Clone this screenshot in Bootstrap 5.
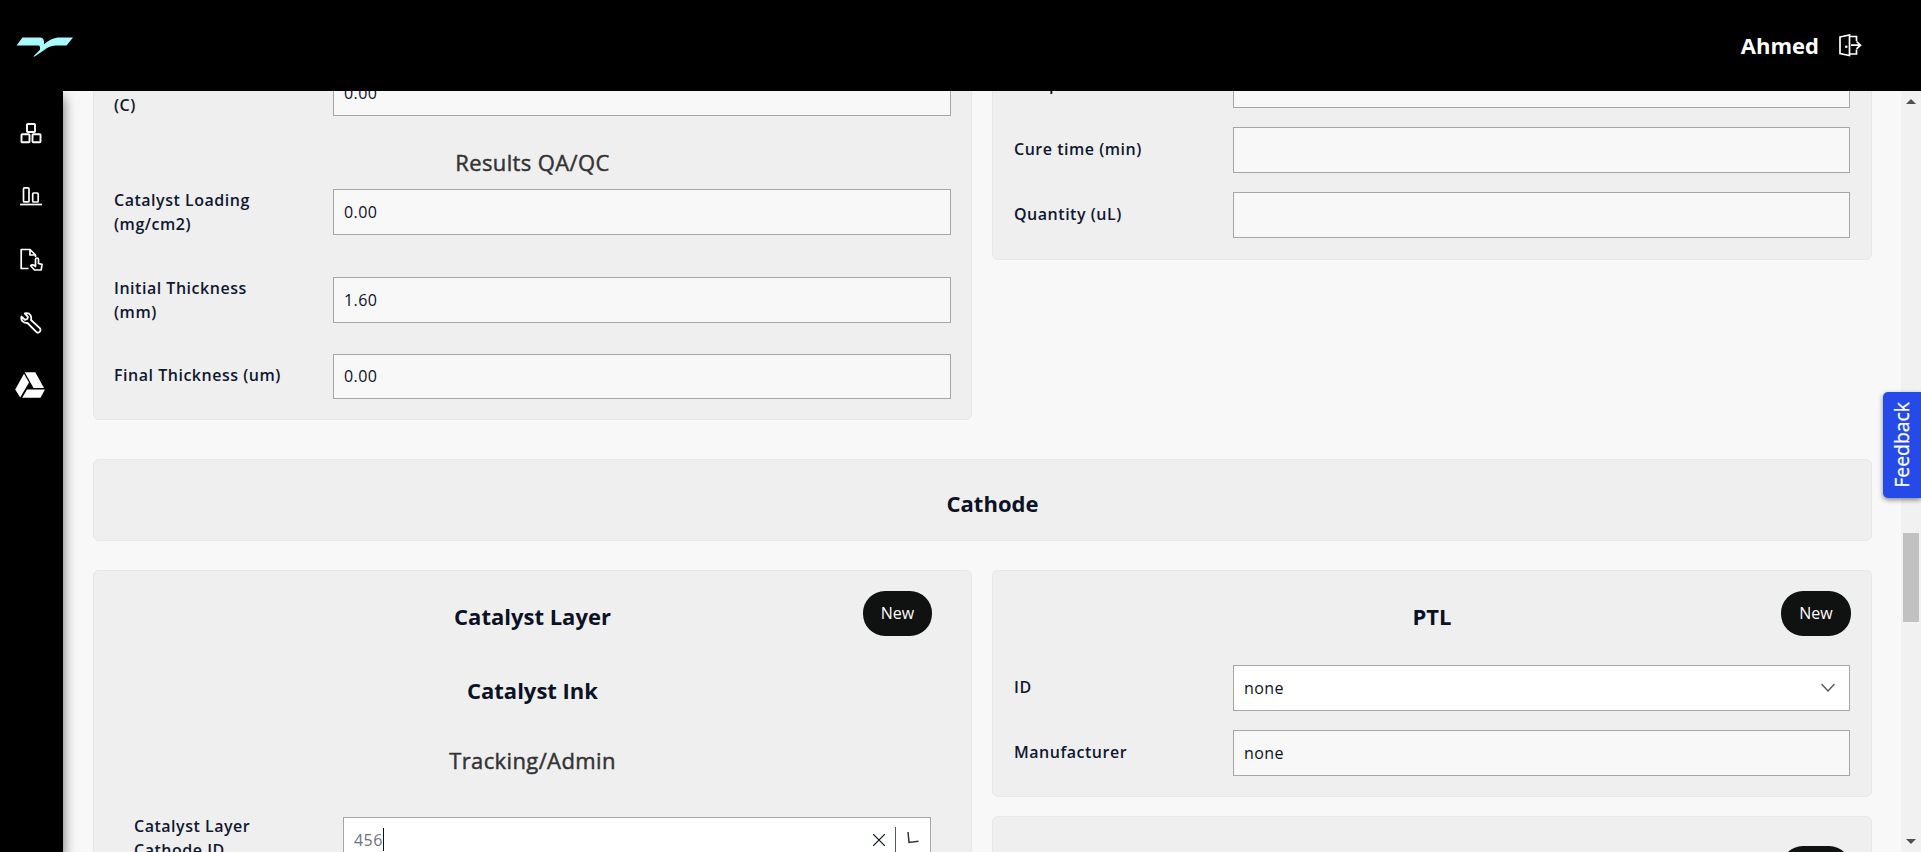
<!DOCTYPE html>
<html lang="en">
<head>
<meta charset="utf-8">
<title>Assembly form</title>
<link rel="stylesheet" href="https://cdn.jsdelivr.net/npm/bootstrap@5.3.0/dist/css/bootstrap.min.css">
<style>
  body { font-family: "Open Sans", sans-serif; font-size: 16px; line-height: 24px; color: #0b1226; background: #f8f8f8; }
  .topbar { height: 91px; background: #000; padding-left: 16px; padding-right: 59px; }
  .user-name { font-size: 22px; font-weight: 700; padding-bottom: 2px; }
  .logout { margin-left: 19px; }
  .side { width: 63px; background: #000; box-shadow: 0 6px 12px 0 rgba(0,0,0,.6); padding-top: 29px; z-index: 1; }
  .side svg { display: block; }
  .side a { height: 26px; margin-bottom: 37.300px; padding-right: 1px; display: flex; align-items: center; justify-content: center; }
  .content { padding-left: 30px; padding-right: 29px; }
  .scroll-up { margin-top: -45px; }
  .panel { background: #efefef; border: 1px solid #e7e7e7; border-radius: 6px; }
  .pair { display: grid; grid-template-columns: 879px 880px; column-gap: 20px; align-items: start; }
  .field { display: grid; grid-template-columns: 219px 1fr; padding: 0 20px; }
  .field label { font-weight: 600; padding-right: 20px; letter-spacing: .52px; margin-top: -1px; color: #101830; }
  .field .form-control { height: 46px; border: 1px solid #a6a6a6; border-radius: 0; background: #f8f8f8; padding: 0 10px 1px; font-size: 16px; color: #0b1226; letter-spacing: .45px; }
  .field .form-control.white { background: #fff; }
  .right-col .field { padding: 0 21px; }
  .right-col .field label { margin-top: 0; }
  .two { height: 88px; }
  .one { height: 65px; }
  .one label { padding-top: 10px; }
  .heading { font-size: 22px; line-height: 30px; font-weight: 700; text-align: center; margin: 0; }
  .sub { font-weight: 500; color: #333; letter-spacing: .38px; -webkit-text-stroke: .45px #333; }
  .new-btn { position: absolute; top: 20px; width: 70px; height: 45px; border-radius: 22px; background: #101211; color: #fff; font-size: 16px; padding: 0 0 1px; border: 0; }
  .new-btn:hover { background: #101211; color: #fff; }
  .bar { width: 20px; background: #f1f1f1; padding: 8px 0; }
  .thumb { width: 16px; height: 89px; background: #c1c1c1; margin-top: 429px; }
  .feedback { top: 392px; right: 0; width: 38px; height: 106px; background: #254ae8; border-radius: 5px 0 0 5px; box-shadow: 0 2px 5px rgba(0,0,0,.45); color: #fff; z-index: 5; }
  .feedback span { writing-mode: vertical-rl; transform: rotate(180deg); font-size: 19.400px; line-height: 26px; -webkit-text-stroke: .25px #fff; padding-top: 1px; }
  .caret { width: 1px; height: 23px; background: #0b1226; }
</style>
</head>
<body class="vh-100 overflow-hidden d-flex flex-column">
<header class="topbar d-flex align-items-center justify-content-between text-white flex-shrink-0">
  <svg width="58" height="22" viewBox="0 0 58 22" fill="#a9f9fd"><path d="M6.500 2.500H23c3.500 0 5 1.300 5 4.500V9.500C33 4.700 38 2.500 44 2.500H57l-6.500 8H42c-6 0-9.500 1.200-13 4L18.700 21.500H17.300l6.700-6.800V12.500c0-1.700-1.200-2-3-2H.5z"/></svg>
  <div class="d-flex align-items-center">
    <span class="user-name">Ahmed</span>
    <svg class="logout" width="24" height="24" viewBox="0 0 24 24" fill="none" stroke="#fff" stroke-width="1.700"><path d="M2 3 11.500 1v20.500L2 19.500zM11.500 2.500H18.500v4.500M11.500 20H18.500V15.500M13 11.200H22M18.500 7.500l4 3.700-4 3.700"/><circle cx="8.300" cy="12.800" r="1.300" fill="#fff" stroke="none"/></svg>
  </div>
</header>
<div class="d-flex flex-grow-1 overflow-hidden">
  <nav class="side flex-shrink-0">
    <a href="#"><svg width="22" height="22" viewBox="0 0 22 22" fill="none" stroke="#fff" stroke-width="1.900"><rect x="7" y="2" width="8" height="8" rx=".8"/><rect x="1.500" y="12.300" width="8" height="8" rx=".8"/><rect x="12.500" y="12.300" width="8" height="8" rx=".8"/></svg></a>
    <a href="#"><svg width="22" height="20" viewBox="0 0 22 20" fill="none" stroke="#fff" stroke-width="1.700"><path d="M0 18.500H22"/><rect x="3.500" y="1.900" width="5.500" height="14" rx="1"/><rect x="12.700" y="7" width="5.500" height="9" rx="1"/></svg></a>
    <a href="#"><svg width="24" height="24" viewBox="0 0 24 24" fill="none" stroke="#fff" stroke-width="1.700" stroke-linejoin="round"><path d="M9.500 20.500H2.200V1.500H11L16.500 7V9M11 1.500V7H16.500"/><path d="M16.500 18.500V11.500a1.500 1.500 0 0 1 3 0V15.500l3.500.9-.8 5.600H15.500l-3.800-4.200c.8-1.500 2.800-1.300 4.800.7z"/></svg></a>
    <a href="#"><svg width="22" height="22" viewBox="0 0 22 22" fill="none" stroke="#fff" stroke-width="1.800" stroke-linejoin="round"><path d="M7 1.200 4.800 1.500 8 4.800 7.300 7 5 7.800 1.500 4.500C.5 8 3 11.300 7.500 11l8.500 8.700a2.500 2.500 0 0 0 3.800-3.500L11 8C12 3.800 9.500 1.200 7 1.200z"/></svg></a>
    <a href="#"><svg style="margin:-2px 2px 0 0" width="30" height="26" viewBox="0 0 30 26" fill="#fff"><path d="M9.700.3H20.300L29 16H18.500zM9 1.800 14 10.500 5.200 25.500.2 17.500zM12 17.500H30L25.500 25.800H7.200z"/></svg></a>
  </nav>
  <main class="content flex-grow-1 overflow-hidden">
    <div class="pair scroll-up">
      <section class="panel" style="height:374px">
        <div class="field" style="padding-top:23px;height:100px">
          <label>Temperature<br>(C)</label><input class="form-control" value="0.00">
        </div>
        <h3 class="heading sub" style="height:42px">Results QA/QC</h3>
        <div class="field two"><label>Catalyst Loading (mg/cm2)</label><input class="form-control" value="0.00"></div>
        <div class="field" style="height:77px"><label>Initial Thickness<br>(mm)</label><input class="form-control" value="1.60"></div>
        <div class="field one"><label>Final Thickness (um)</label><input class="form-control" value="0.00" style="height:45px"></div>
      </section>
      <section class="panel right-col" style="height:214px;padding-top:15px">
        <div class="field one"><label>Temperature</label><input class="form-control"></div>
        <div class="field one"><label>Cure time (min)</label><input class="form-control"></div>
        <div class="field one"><label>Quantity (uL)</label><input class="form-control"></div>
      </section>
    </div>
    <section class="panel" style="height:82px;margin:39px 0 29px;padding:28px 0 0 20px"><h2 class="heading">Cathode</h2></section>
    <div class="pair">
      <section class="panel position-relative" style="height:500px;padding-top:30px">
        <button class="btn new-btn" style="right:39px;width:69px">New</button>
        <h2 class="heading">Catalyst Layer</h2>
        <h2 class="heading" style="margin-top:44px">Catalyst Ink</h2>
        <h3 class="heading sub" style="margin-top:40px">Tracking/Admin</h3>
        <div class="field" style="margin-top:42px;padding:0 40px;grid-template-columns:209px 588px">
          <label style="margin-top:-3px">Catalyst Layer<br>Cathode ID</label>
          <div class="form-control white d-flex align-items-center">
            <span style="color:#6b7280">456</span><span class="caret"></span>
            <svg class="ms-auto" width="12" height="12" viewBox="0 0 12 12" stroke="#0b1226" stroke-width="1.200"><path d="M0 0 12 12M12 0 0 12"/></svg>
            <span class="caret" style="height:26px;margin:0 11px 0 10px;opacity:.7"></span>
            <svg width="12" height="12" viewBox="0 0 12 12" fill="none" stroke="#333" stroke-width="1.500" style="margin:0 1px 3px 0"><path d="M1 0 2 10.500 11.500 9.300"/></svg>
          </div>
        </div>
      </section>
      <div class="right-col">
        <section class="panel position-relative" style="height:227px;padding-top:30px;margin-bottom:19px">
          <button class="btn new-btn" style="right:20px">New</button>
          <h2 class="heading" style="height:64px">PTL</h2>
          <div class="field one"><label>ID</label><div class="form-control white d-flex align-items-center justify-content-between">none<svg width="16" height="10" viewBox="0 0 16 10" fill="none" stroke="#555" stroke-width="1.300" style="margin-right:3px"><path d="M1.500 1 8 8 14.500 1"/></svg></div></div>
          <div class="field one"><label>Manufacturer</label><input class="form-control" value="none"></div>
        </section>
        <section class="panel position-relative" style="height:200px"><button class="btn new-btn" style="right:20px;top:29px">New</button></section>
      </div>
    </div>
  </main>
  <div class="bar d-flex flex-column align-items-center flex-shrink-0">
    <svg width="10" height="5" viewBox="0 0 10 5" fill="#505050"><path d="M0 5 5 0l5 5z"/></svg>
    <div class="thumb"></div>
    <svg class="mt-auto" width="10" height="5" viewBox="0 0 10 5" fill="#505050"><path d="M0 0 5 5l5-5z"/></svg>
  </div>
</div>
<div class="feedback position-absolute d-flex align-items-center justify-content-center"><span>Feedback</span></div>
<script src="https://cdn.jsdelivr.net/npm/bootstrap@5.3.0/dist/js/bootstrap.bundle.min.js"></script>
</body>
</html>
